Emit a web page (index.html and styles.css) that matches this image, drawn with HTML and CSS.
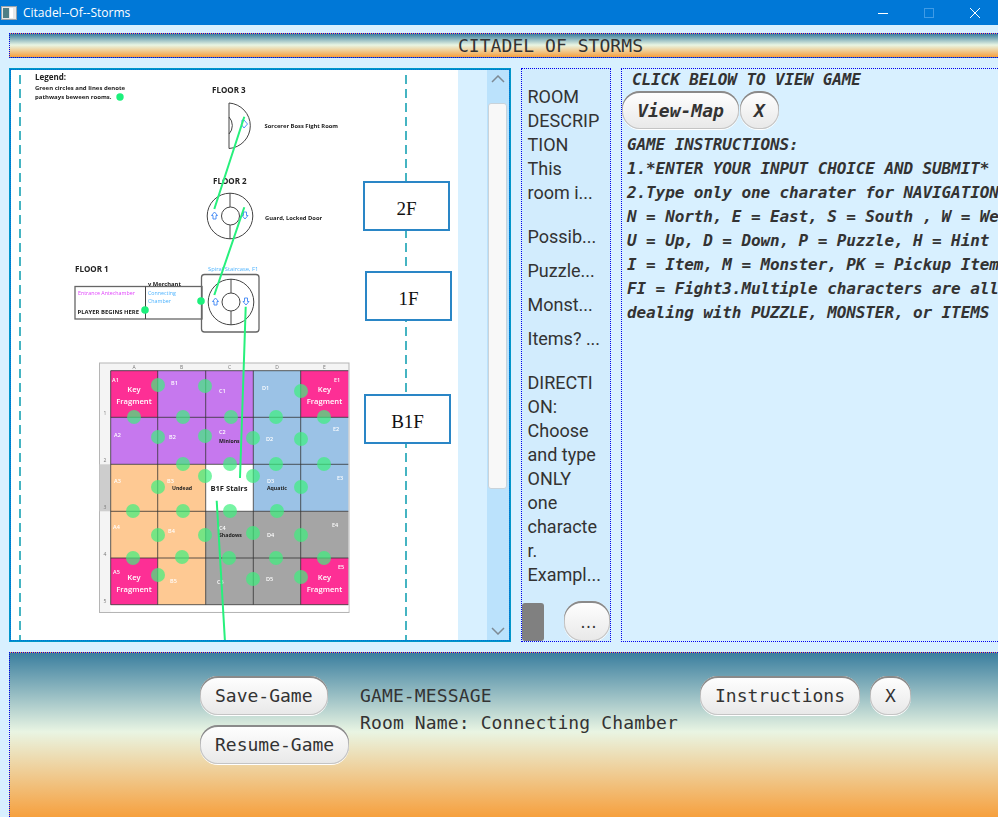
FILE: index.html
```html
<!DOCTYPE html>
<html lang="en">
<head>
  <meta charset="UTF-8" />
  <title>Citadel--Of--Storms</title>
  <link rel="stylesheet" href="styles.css">
</head>
<body>
  <div class="titlebar">
    <svg class="app-icon" viewBox="0 0 16 16" width="16" height="16">
      <rect x="0.5" y="1.5" width="15" height="13" fill="#e8e8e8" stroke="#9aa5ad"/>
      <rect x="2" y="3" width="6" height="10" fill="#4f7f86"/>
      <rect x="9" y="3" width="3" height="10" fill="#fff"/>
    </svg>
    <span class="title-text">Citadel--Of--Storms</span>
    <div class="win-buttons">
      <svg viewBox="0 0 10 10" width="10" height="10"><path d="M0 5.5h10" stroke="#fff" fill="none"/></svg>
      <svg viewBox="0 0 10 10" width="10" height="10"><rect x="0.5" y="0.5" width="9" height="9" stroke="#3f9be6" fill="none"/></svg>
      <svg viewBox="0 0 10 10" width="10" height="10"><path d="M0 0l10 10M10 0L0 10" stroke="#fff" fill="none"/></svg>
    </div>
  </div>

  <div class="page">
    <div class="banner">CITADEL OF STORMS</div>

    <div class="panels">
      <div class="map-panel">
        <div class="map-view">
          <svg class="map" viewBox="0 0 447 570" width="447" height="570">
            <g transform="translate(-11,-70)">
              <path class="dash" d="M20 75V641M406 75V641"/>

              <text class="b" x="35" y="80" font-size="8">Legend:</text>
              <text class="b" x="35" y="90" font-size="6">Green circles and lines denote</text>
              <text class="b" x="35" y="99" font-size="6">pathways beween rooms.</text>
              <circle class="dot" cx="120" cy="97" r="3.7"/>

              <!-- floor 3 -->
              <text class="b" x="212" y="93" font-size="8">FLOOR 3</text>
              <path class="wall" d="M229 103V148.500A22.800 22.800 0 0 0 229 103ZM229 117A12.500 12.500 0 0 1 229 134"/>
              <path class="arrow" d="M244 120l3.500 4-3.500 4-3-4h1v-4z"/>
              <text class="b" x="264.500" y="128" font-size="5.800">Sorcerer Boss Fight Room</text>

              <!-- floor 2 -->
              <text class="b" x="213" y="184" font-size="8">FLOOR 2</text>
              <circle class="wall" cx="230" cy="216" r="22.800"/>
              <circle class="wall" cx="230.500" cy="216" r="9"/>
              <path class="wall" d="M230 193V207M230 225V239"/>
              <path class="arrow" d="M214.500 212l3 3.500h-1.500v3.500h-3v-3.500h-1.500z"/>
              <path class="arrow" d="M245 219l3-3.500h-1.500v-3.500h-3v3.500h-1.500z"/>
              <text class="b" x="265" y="220" font-size="5.800">Guard, Locked Door</text>

              <!-- floor 1 -->
              <text class="b" x="75" y="272" font-size="8">FLOOR 1</text>
              <text class="cyan" x="208" y="271" font-size="5.800">Spiral Staircase, F1</text>
              <rect class="wall thick" x="75" y="286.500" width="127" height="32.500"/>
              <path class="wall" d="M145.500 286.500V319"/>
              <rect class="wall thick" x="201.500" y="274.500" width="57.500" height="57.500" rx="3"/>
              <circle class="wall" cx="231" cy="302" r="22.800"/>
              <circle class="wall" cx="231" cy="302" r="9"/>
              <path class="wall" d="M231 279V293M231 311V325"/>
              <path class="arrow" d="M215.500 298l3 3.500h-1.500v3.500h-3v-3.500h-1.500z"/>
              <path class="arrow" d="M246 305l3-3.500h-1.500v-3.500h-3v3.500h-1.500z"/>
              <text class="b" x="148" y="286" font-size="5.800">v Merchant</text>
              <text class="pink" x="78" y="295" font-size="5.300">Entrance Antechamber</text>
              <text class="b" x="77.500" y="314" font-size="5.900">PLAYER BEGINS HERE</text>
              <text class="cyan" x="148" y="295" font-size="5.300">Connecting</text>
              <text class="cyan" x="148" y="303" font-size="5.300">Chamber</text>
              <circle class="dot" cx="145" cy="310" r="3.800"/>
              <circle class="dot" cx="201" cy="301" r="3.800"/>

              <!-- B1F sheet -->
              <rect x="99.500" y="363" width="249.500" height="249.500" fill="#f4f4f4" stroke="#b5b5b5"/>
              <rect x="110.500" y="604.700" width="238" height="7" fill="#fff"/>
              <rect x="99.500" y="464.300" width="11" height="47" fill="#cdcdcd"/>
              <g font-size="5" fill="#777" text-anchor="middle">
                <text x="134" y="369">A</text><text x="181.500" y="369">B</text><text x="229.500" y="369">C</text><text x="277" y="369">D</text><text x="324.500" y="369">E</text>
                <text x="105" y="415">1</text><text x="105" y="462">2</text><text x="105" y="509">3</text><text x="105" y="556">4</text><text x="105" y="603">5</text>
              </g>
              <rect fill="#c678ee" x="110.700" y="370.700" width="143" height="93.600"/>
              <rect fill="#9bc2e6" x="253.300" y="370.700" width="95" height="140.600"/>
              <rect fill="#fec993" x="110.700" y="464.300" width="95" height="94"/>
              <rect fill="#fec993" x="157.700" y="558" width="48" height="46.700"/>
              <rect fill="#a5a5a5" x="205.700" y="511.300" width="142.600" height="93.400"/>
              <rect fill="#fff" x="205.700" y="464.300" width="47.600" height="47"/>
              <rect class="key" x="110.700" y="370.700" width="47" height="46.600"/>
              <rect class="key" x="300.700" y="370.700" width="47.600" height="46.600"/>
              <rect class="key" x="110.700" y="558" width="47" height="46.700"/>
              <rect class="key" x="300.700" y="558" width="47.600" height="46.700"/>
              <path class="grid" d="M157.700 370.700V604.700M205.700 370.700V604.700M253.300 370.700V604.700M300.700 370.700V604.700M110.700 417.300H348.300M110.700 464.300H348.300M110.700 511.300H348.300M110.700 558H348.300M110.700 604.700H348.300M110.700 370.700H348.300M110.700 370.700V604.700"/>

              <g class="cell" font-size="5.500">
                <text x="112" y="382">A1</text><text x="171" y="385">B1</text><text x="219" y="393">C1</text><text x="262" y="390">D1</text><text x="334" y="382">E1</text>
                <text x="114" y="437">A2</text><text x="169" y="439">B2</text><text x="219" y="434">C2</text><text x="266" y="441">D2</text><text x="333" y="431">E2</text>
                <text x="114" y="483">A3</text><text x="167" y="483">B3</text><text x="267" y="483">D3</text><text x="337" y="480">E3</text>
                <text x="113" y="529">A4</text><text x="168" y="533">B4</text><text x="219" y="530">C4</text><text x="267" y="537">D4</text><text x="332" y="527">E4</text>
                <text x="113" y="574">A5</text><text x="170" y="583">B5</text><text x="217" y="584">C5</text><text x="266" y="581">D5</text><text x="338" y="569">E5</text>
              </g>
              <g class="cell" font-size="7.600" text-anchor="middle">
                <text x="134" y="392">Key</text><text x="134" y="403.500">Fragment</text>
                <text x="324.500" y="392">Key</text><text x="324.500" y="403.500">Fragment</text>
                <text x="134" y="580">Key</text><text x="134" y="591.500">Fragment</text>
                <text x="324.500" y="580">Key</text><text x="324.500" y="591.500">Fragment</text>
              </g>
              <g class="b" font-size="5.200">
                <text x="219" y="443">Minions</text><text x="172" y="490">Undead</text><text x="267" y="490">Aquatic</text><text x="219" y="537">Shadows</text>
              </g>
              <text class="b" x="229" y="491" font-size="7.600" text-anchor="middle">B1F Stairs</text>

              <g id="room-dots"></g>

              <path class="link" d="M244.300 116.700L214.300 209M244.300 207.300L214.300 295M245.700 306.700L244.300 350L240 478M216.700 500.700L225 642"/>
            </g>
          </svg>
          <div class="floor-tag tag-2f">2F</div>
          <div class="floor-tag tag-1f">1F</div>
          <div class="floor-tag tag-b1f">B1F</div>
        </div>
        <div class="scrollbar">
          <svg class="chev" viewBox="0 0 14 8" width="14" height="8"><path d="M1 7l6-6 6 6" fill="none" stroke="#7d8a94" stroke-width="1.500"/></svg>
          <div class="thumb"></div>
          <svg class="chev" viewBox="0 0 14 8" width="14" height="8"><path d="M1 1l6 6 6-6" fill="none" stroke="#7d8a94" stroke-width="1.500"/></svg>
        </div>
      </div>

      <div class="desc-panel">
        <div class="desc-text">
          <p class="gap-big">ROOM<br>DESCRIP<br>TION<br>This<br>room i...</p>
          <p>Possib...</p>
          <p>Puzzle...</p>
          <p>Monst...</p>
          <p class="gap-big">Items? ...</p>
          <p>DIRECTI<br>ON:<br>Choose<br>and type<br>ONLY<br>one<br>characte<br>r.<br>Exampl...</p>
        </div>
        <div class="desc-foot">
          <div class="input-stub"></div>
          <button class="btn btn-more">...</button>
        </div>
      </div>

      <div class="info-panel">
        <div class="info-head">CLICK BELOW TO VIEW GAME</div>
        <div class="info-buttons">
          <button class="btn btn-map">View-Map</button>
          <button class="btn btn-map btn-x">X</button>
        </div>
        <div class="info-text">
          <div>GAME INSTRUCTIONS:</div>
          <div>1.*ENTER YOUR INPUT CHOICE AND SUBMIT*</div>
          <div>2.Type only one charater for NAVIGATION</div>
          <div>N = North, E = East, S = South , W = We</div>
          <div>U = Up, D = Down, P = Puzzle, H = Hint</div>
          <div>I = Item, M = Monster, PK = Pickup Item</div>
          <div>FI = Fight3.Multiple characters are all</div>
          <div>dealing with PUZZLE, MONSTER, or ITEMS</div>
        </div>
      </div>
    </div>

    <div class="footer">
      <div class="save-col">
        <button class="btn">Save-Game</button>
        <button class="btn">Resume-Game</button>
      </div>
      <div class="message">
        <div>GAME-MESSAGE</div>
        <div>Room Name: Connecting Chamber</div>
      </div>
      <div class="help-row">
        <button class="btn">Instructions</button>
        <button class="btn">X</button>
      </div>
    </div>
  </div>

  <script>
    const dots = [
      [158,385],[205,386],[301,391],
      [134,417],[183,417],[231,417],[276,417],[324,417],
      [158,437],[205,436],[253,438],[301,439],
      [183,464],[230,464],[276,464],[324,464],
      [205,476],[253,476],[158,487],[301,487],
      [133,511],[183,511],[230,511],[277,511],
      [158,535],[205,535],[253,533],[301,535],
      [133,558],[182,557],[229,558],[276,558],[324,558],
      [158,575],[253,579],[301,577]
    ];
    const group = document.getElementById('room-dots');
    dots.forEach(d => {
      const c = document.createElementNS('http://www.w3.org/2000/svg', 'circle');
      c.setAttribute('cx', d[0]);
      c.setAttribute('cy', d[1]);
      c.setAttribute('r', 7);
      group.appendChild(c);
    });
  </script>
</body>
</html>
```

FILE: styles.css
```css
html, body {
  margin: 0;
  height: 100%;
  overflow: hidden;
}

body {
  background-color: #D8F0FF;
  color: #333;
  font-family: "DejaVu Sans Mono", monospace;
}

.titlebar {
  height: 25px;
  background-color: #0078D7;
  color: #fff;
  display: flex;
  align-items: center;
  padding-left: 1px;
  font-family: "Open Sans", sans-serif;
  font-size: 12px;
}

.app-icon {
  margin-right: 6px;
}

.win-buttons {
  margin-left: auto;
  display: flex;
  gap: 36px;
  padding-right: 18px;
}

.page {
  display: flex;
  flex-direction: column;
  padding: 8px 0 0 9px;
  width: 998px;
  box-sizing: border-box;
}

.banner {
  height: 25px;
  line-height: 23px;
  text-align: center;
  font-size: 18px;
  letter-spacing: 0.050px;
  padding-left: 93px;
  box-sizing: border-box;
  border-top: 1px dotted #0000ee;
  border-bottom: 1px dotted #0000ee;
  border-left: 1px dotted #0000ee;
  background: linear-gradient(#3b7f9f, #e9f5e3 48%, #f6a03e);
}

.panels {
  display: grid;
  grid-template-columns: 502px 90px 1fr;
  column-gap: 10px;
  height: 574px;
  margin-top: 10px;
}

.map-panel {
  display: flex;
  box-sizing: border-box;
  border: 2px solid #0096c9;
  outline: 1px dotted #0070d8;
  outline-offset: -2px;
}

.map-view {
  position: relative;
  flex: 1;
  min-width: 0;
  overflow: hidden;
}

.map {
  display: block;
  background-color: #fff;
  font-family: "Open Sans", sans-serif;
  filter: blur(0.4px);
}

.map .b {
  fill: #222;
  font-weight: 700;
}

.map .cyan {
  fill: #4db3ff;
}

.map .pink {
  fill: #e040fb;
}

.map .cell {
  fill: #fff;
  font-weight: 600;
}

.dash {
  fill: none;
  stroke: #45b4c2;
  stroke-width: 2;
  stroke-dasharray: 9 5;
}

.wall {
  fill: none;
  stroke: #444;
  stroke-width: 1;
}

.thick {
  stroke: #666;
  stroke-width: 1.300;
}

.arrow {
  fill: none;
  stroke: #3d86f5;
  stroke-width: 0.900;
}

.dot {
  fill: #1cf07c;
}

#room-dots circle {
  fill: #3df07e;
  opacity: 0.7;
}

.key {
  fill: #fd2f95;
}

.grid {
  fill: none;
  stroke: #333;
  stroke-width: 0.800;
}

.link {
  fill: none;
  stroke: #27f07c;
  stroke-width: 2;
}

.floor-tag {
  position: absolute;
  width: 87px;
  height: 50px;
  line-height: 51px;
  box-sizing: border-box;
  border: 2px solid #2a86c6;
  background-color: #fff;
  color: #111;
  text-align: center;
  font-family: "Liberation Serif", serif;
  font-size: 19px;
}

.tag-2f {
  left: 352px;
  top: 111px;
}

.tag-1f {
  left: 354px;
  top: 201px;
}

.tag-b1f {
  left: 353px;
  top: 324px;
}

.scrollbar {
  width: 22px;
  flex: none;
  display: flex;
  flex-direction: column;
  align-items: center;
  background-color: #BBE2FC;
  padding: 5px 0;
  box-sizing: border-box;
}

.chev {
  flex: none;
}

.thumb {
  width: 19px;
  height: 386px;
  margin-top: 20px;
  margin-bottom: auto;
  margin-right: 1px;
  background-color: #f8f8f8;
  border: 1px solid #c9d3da;
  border-radius: 3px;
  box-sizing: border-box;
}

.desc-panel,
.info-panel {
  box-sizing: border-box;
  border: 1px dotted #0000ee;
  min-width: 0;
  overflow: hidden;
}

.desc-panel {
  display: flex;
  flex-direction: column;
  background-color: #D2ECFD;
}

.desc-text {
  flex: 1;
  padding: 16px 0 0 5.500px;
  font-family: Roboto, sans-serif;
  font-size: 18px;
  line-height: 24px;
  white-space: nowrap;
  color: #333;
}

.desc-text p {
  margin: 0 0 10px;
}

.desc-text .gap-big {
  margin-bottom: 20px;
}

.desc-foot {
  display: flex;
  align-items: flex-end;
  justify-content: space-between;
}

.input-stub {
  width: 22px;
  height: 38px;
  background-color: #808080;
  border-radius: 3px;
}

.btn {
  height: 39px;
  padding: 0 15px;
  border: none;
  border-radius: 18px;
  background: linear-gradient(#ffffff, #e8e8e8);
  box-shadow: inset 0 2px 0 #8a8a8a, inset 0 0 0 1px #c4c4c4, 0 1px 0 #fff;
  color: #333;
  font-family: "DejaVu Sans Mono", monospace;
  font-size: 18px;
}

.btn-more {
  width: 46px;
  height: 40px;
  padding: 3px 0 0;
  font-size: 14px;
  letter-spacing: -3px;
}

.info-panel {
  border-right: none;
  white-space: nowrap;
  font-style: italic;
  font-weight: 700;
  font-size: 16px;
}

.info-head {
  padding-left: 10px;
  line-height: 21px;
  letter-spacing: -0.100px;
}

.info-buttons {
  display: flex;
  gap: 1px;
  margin-top: 1px;
}

.btn-map {
  width: 117px;
  height: 38px;
  padding: 0;
  font-style: italic;
  font-weight: 700;
}

.btn-x {
  width: 39px;
}

.info-text {
  padding: 4px 0 0 5px;
  line-height: 24px;
  letter-spacing: -0.100px;
}

.footer {
  display: flex;
  height: 165px;
  margin-top: 10px;
  padding: 23px 0 0 190px;
  box-sizing: border-box;
  border-top: 1px dotted #0000ee;
  border-left: 1px dotted #0000ee;
  background: linear-gradient(#3b7f9f, #e9f5e3 48%, #f6a03e);
}

.save-col {
  display: flex;
  flex-direction: column;
  align-items: flex-start;
  gap: 10px;
  width: 160px;
}

.message {
  width: 340px;
  padding-top: 6px;
  font-size: 18px;
  line-height: 27px;
  letter-spacing: 0.130px;
  white-space: nowrap;
}

.help-row {
  display: flex;
  gap: 10px;
  align-items: flex-start;
}
```
